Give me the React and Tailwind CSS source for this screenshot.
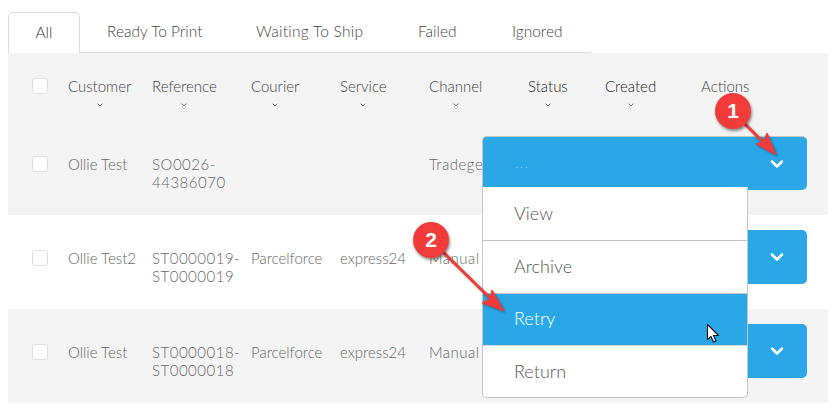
import React from 'react';
import { ChevronDown } from 'lucide-react';

const tabs = ['All', 'Ready To Print', 'Waiting To Ship', 'Failed', 'Ignored'];

const columns = [
    { label: 'Customer', color: 'text-[#444]' },
    { label: 'Reference', color: 'text-[#444]' },
    { label: 'Courier', color: 'text-[#444]' },
    { label: 'Service', color: 'text-[#444]' },
    { label: 'Channel', color: 'text-[#444]' },
    { label: 'Status', color: 'text-[#222]' },
    { label: 'Created', color: 'text-[#222]' },
];

const rows = [
    { customer: 'Ollie Test', ref: ['SO0026-', '44386070'], courier: '', service: '', channel: 'Tradegecko', bg: 'bg-[#f4f4f4]', hasButton: false },
    { customer: 'Ollie Test2', ref: ['ST0000019-', 'ST0000019'], courier: 'Parcelforce', service: 'express24', channel: 'Manual', bg: 'bg-white', hasButton: true },
    { customer: 'Ollie Test', ref: ['ST0000018-', 'ST0000018'], courier: 'Parcelforce', service: 'express24', channel: 'Manual', bg: 'bg-[#f4f4f4]', hasButton: true },
];

const gridCols = 'grid grid-cols-[60px_84px_99px_89px_89px_99px_77px_96px_127px]';

const Checkbox = () => (
    <div className="w-4 h-4 ml-6 rounded-[3px] bg-white border border-[#dedede]" />
);

const Annotation = ({ n, left, top }) => (
    <div
        className={`absolute ${left} ${top} w-9 h-9 rounded-full bg-[#f23c3c] text-white text-[21px] font-bold flex items-center justify-center shadow-[1px_2px_3px_rgba(0,0,0,0.45)] font-['Liberation_Sans',sans-serif]`}
    >
        {n}
    </div>
);

const App = () => {
    return (
        <div className="relative w-[831px] h-[406px] overflow-hidden bg-white font-['Lato',sans-serif] font-light">
            <div className="pl-2 pt-3 w-[828px]">
                {/* tabs */}
                <div className="flex h-[41px] w-[583px] border-b border-[#dddddd] text-[15.5px] text-[#444]">
                    {tabs.map((tab, i) => (
                        <div
                            key={tab}
                            className={
                                i === 0
                                    ? 'w-[72px] h-[41px] flex items-center justify-center bg-white border border-b-0 border-[#dddddd] rounded-t-[5px] text-[#333]'
                                    : 'h-10 flex items-center ' +
                                      (i === 1 ? 'ml-[27px] w-[149px]' : i === 2 ? 'w-[162px] tracking-[0.25px]' : i === 3 ? 'w-[94px]' : 'w-[53px]')
                            }
                        >
                            {tab}
                        </div>
                    ))}
                </div>

                {/* header */}
                <div className={`${gridCols} h-[68px] bg-[#f4f4f4] pt-[22px] text-[15px]`}>
                    <div className="pt-[3px]">
                        <Checkbox />
                    </div>
                    {columns.map(col => (
                        <div key={col.label} className={`w-fit flex flex-col items-center leading-[22px] ${col.color}`}>
                            <span>{col.label}</span>
                            <ChevronDown size={8} strokeWidth={2.25} className="mt-[4px] text-[#444]" />
                        </div>
                    ))}
                    <div className="text-[#444] leading-[22px]">Actions</div>
                </div>

                {/* rows */}
                {rows.map((row, i) => (
                    <div key={i} className={`${gridCols} h-[94px] ${row.bg} text-[15px] leading-[18px] text-[#666] pt-[34px]`}>
                        <div className="pt-[1px]">
                            <Checkbox />
                        </div>
                        <div className="whitespace-nowrap">{row.customer}</div>
                        <div className="whitespace-nowrap tracking-[0.5px]">
                            {row.ref[0]}
                            <br />
                            {row.ref[1]}
                        </div>
                        <div className="whitespace-nowrap">{row.courier}</div>
                        <div className="whitespace-nowrap">{row.service}</div>
                        <div className="whitespace-nowrap tracking-[0.5px]">{row.channel}</div>
                        <div />
                        <div />
                        <div className="-mt-[19px]">
                            {row.hasButton && (
                                <div className="w-[106px] h-[54px] rounded-[5px] bg-[#29a7e6] flex items-center justify-end pr-[20px] text-white">
                                    <ChevronDown size={20} strokeWidth={3} />
                                </div>
                            )}
                        </div>
                    </div>
                ))}
            </div>

            {/* open dropdown */}
            <div className="absolute left-[482px] top-[136px] w-[325px]">
                <div className="h-[54px] rounded-[5px] rounded-bl-none bg-[#29a7e6] border-t border-l border-[#c4c4c4] flex items-center justify-between pl-[32px] pr-[20px] text-white">
                    <span className="text-[13px] tracking-[2px] text-[#8fd3f5]">...</span>
                    <ChevronDown size={20} strokeWidth={3} />
                </div>
                <div className="absolute top-[51px] left-0 w-[266px] h-[211px] bg-white border-x border-b border-[#c4c4c4] rounded-b-[5px] overflow-hidden text-[18px] text-[#555]">
                    <div className="h-[54px] flex items-center pl-[31px] pb-[1px] border-b border-[#c4c4c4]">View</div>
                    <div className="h-[53px] flex items-center pl-[31px] pb-[2px] border-b border-[#c4c4c4]">Archive</div>
                    <div className="h-[52px] flex items-center pl-[31px] pb-[3px] bg-[#29a7e6] text-white border-b border-[#d8d8d8]">Retry</div>
                    <div className="h-[51px] flex items-center pl-[31px]">Return</div>
                </div>
            </div>

            {/* mouse cursor */}
            <svg className="absolute left-[706px] top-[323px]" width="16" height="22" viewBox="0 0 16 22">
                <path d="M1.5 1.5 L1.5 16.5 L5 13.5 L7.5 19 L10 18 L7.5 12.5 L12.5 12.5 Z" fill="#fff" stroke="#111" strokeWidth="1.1" strokeLinejoin="round" />
            </svg>

            {/* annotation arrows */}
            <svg className="absolute left-0 top-0 pointer-events-none" width="831" height="406" viewBox="0 0 831 406">
                <g fill="#ee3b3b" stroke="#ee3b3b" style={{ filter: 'drop-shadow(1px 1px 1px rgba(0,0,0,0.35))' }}>
                    <line x1="745" y1="124" x2="768" y2="147" strokeWidth="3" />
                    <path d="M776 155 L756 144 L763 142 L767 133 Z" strokeWidth="1" />
                    <line x1="443" y1="252" x2="495" y2="303" strokeWidth="3" />
                    <path d="M504 311 L482 303 L490 299 L492 290 Z" strokeWidth="1" />
                </g>
            </svg>

            <Annotation n="1" left="left-[715px]" top="top-[93px]" />
            <Annotation n="2" left="left-[413px]" top="top-[222px]" />
        </div>
    );
};

export default App;
